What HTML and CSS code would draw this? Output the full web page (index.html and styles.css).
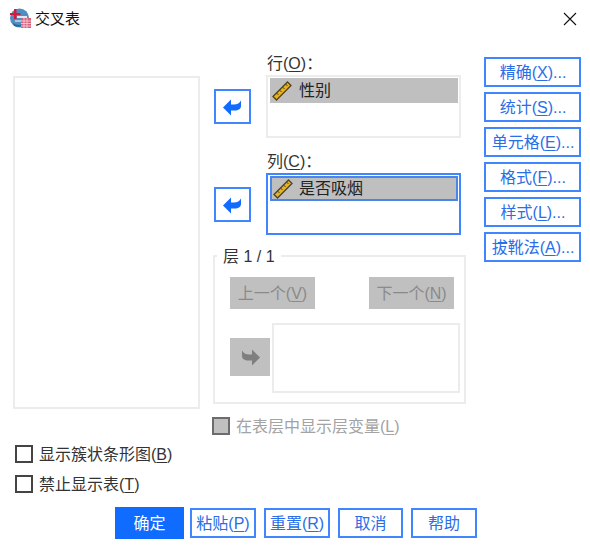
FILE: index.html
```html
<!DOCTYPE html>
<html lang="zh">
<head>
<meta charset="utf-8">
<title>交叉表</title>
<link rel="stylesheet" href="styles.css">
</head>
<body>
<div class="dialog">
  <header class="titlebar">
    <svg class="app-icon" width="21" height="20" viewBox="0 0 21 20">
      <circle cx="9.5" cy="10" r="9.5" fill="#4f8fc0"/>
      <path d="M3 15 Q9 19 15 15 L15 17 Q9 20 4 18Z" fill="#2c6596"/>
      <rect x="7" y="8" width="10" height="2" fill="#dce9f4"/>
      <rect x="5" y="12" width="8" height="2" fill="#a8c8e2"/>
      <path d="M4 1h2.500v4H10.500v2H6.500v4H4V7H0V5h4z" fill="#d31c3c"/>
      <rect x="11" y="10" width="10" height="10" fill="#d9607a"/>
      <path d="M11 13h10M11 15.500h10M11 18h10M14 10v10M17 10v10" stroke="#f6d5dc" stroke-width=".8"/>
    </svg>
    <span class="title">交叉表</span>
    <svg class="close" width="14" height="14" viewBox="0 0 14 14"><path d="M1 1l12 12M13 1L1 13" stroke="#111" stroke-width="1.100" fill="none"/></svg>
  </header>

  <main class="content">
    <section class="left">
      <div class="list source"></div>
      <label class="check first"><span class="box"></span>显示簇状条形图(<u>B</u>)</label>
      <label class="check"><span class="box"></span>禁止显示表(<u>T</u>)</label>
    </section>

    <section class="middle">
      <div class="target">
        <button class="move">
          <svg width="19" height="18" viewBox="0 0 19 18"><path d="M0 9.500L8 1.500V6.500H11C14 6.500 16 5.500 18 2.500V8C18 11 15 12.500 12 12.500H8V17.500Z" fill="#0f6cff"/></svg>
        </button>
        <div class="target-body">
          <div class="field-label">行(<u>O</u>)：</div>
          <div class="list vars">
            <div class="var">
              <svg class="ruler" width="22" height="22" viewBox="0 0 22 22"><path d="M2 16.500L16.500 2L20 5.500L5.500 20Z" fill="#e8b21e" stroke="#4a4326" stroke-width="1.300"/><path d="M5.500 13l2 2M8.500 10l2 2M11.500 7l2 2M14.500 4l2 2" stroke="#4a4326" stroke-width="1"/></svg>
              <span>性别</span>
            </div>
          </div>
        </div>
      </div>

      <div class="target second">
        <button class="move">
          <svg width="19" height="18" viewBox="0 0 19 18"><path d="M0 9.500L8 1.500V6.500H11C14 6.500 16 5.500 18 2.500V8C18 11 15 12.500 12 12.500H8V17.500Z" fill="#0f6cff"/></svg>
        </button>
        <div class="target-body">
          <div class="field-label">列(<u>C</u>)：</div>
          <div class="list vars focused">
            <div class="var selected">
              <svg class="ruler" width="22" height="22" viewBox="0 0 22 22"><path d="M2 16.500L16.500 2L20 5.500L5.500 20Z" fill="#e8b21e" stroke="#4a4326" stroke-width="1.300"/><path d="M5.500 13l2 2M8.500 10l2 2M11.500 7l2 2M14.500 4l2 2" stroke="#4a4326" stroke-width="1"/></svg>
              <span>是否吸烟</span>
            </div>
          </div>
        </div>
      </div>

      <div class="group">
        <span class="legend">层 1 / 1</span>
        <div class="pager">
          <button class="off wide">上一个(<u>V</u>)</button>
          <button class="off wide">下一个(<u>N</u>)</button>
        </div>
        <div class="layer">
          <button class="off move-off">
            <svg width="19" height="18" viewBox="0 0 19 18"><path d="M19 9.500L11 1.500V6.500H8C5 6.500 3 5.500 1 2.500V8C1 11 4 12.500 7 12.500H11V17.500Z" fill="#7f7f7f"/></svg>
          </button>
          <div class="list layer-list"></div>
        </div>
      </div>

      <label class="check disabled"><span class="box"></span>在表层中显示层变量(<u>L</u>)</label>
    </section>

    <aside class="side">
      <button class="btn side-btn">精确(<u>X</u>)...</button>
      <button class="btn side-btn">统计(<u>S</u>)...</button>
      <button class="btn side-btn">单元格(<u>E</u>)...</button>
      <button class="btn side-btn">格式(<u>F</u>)...</button>
      <button class="btn side-btn">样式(<u>L</u>)...</button>
      <button class="btn side-btn">拔靴法(<u>A</u>)...</button>
    </aside>
  </main>

  <footer class="actions">
    <button class="btn primary">确定</button>
    <button class="btn">粘贴(<u>P</u>)</button>
    <button class="btn">重置(<u>R</u>)</button>
    <button class="btn narrow">取消</button>
    <button class="btn">帮助</button>
  </footer>
</div>
</body>
</html>
```

FILE: styles.css
```css
* { box-sizing: border-box; }
html, body { margin: 0; padding: 0; background: #fff; }
body { font: 16px/20px "Liberation Sans", "Noto Sans CJK SC", sans-serif; color: #222; }
u { text-underline-offset: 2px; }

.dialog { width: 590px; height: 551px; background: #fff; overflow: hidden; display: flex; flex-direction: column; }

.titlebar { height: 57px; display: flex; align-items: flex-start; padding: 8px 10px 0 10px; flex: none; }
.app-icon { flex: none; }
.title { margin-left: 4px; font-size: 15px; line-height: 22px; color: #111; }
.close { margin-left: auto; margin-top: 4px; margin-right: 3px; }

.content { display: flex; align-items: flex-start; height: 450px; padding-left: 13px; flex: none; }

.list { background: #fff; border: 2px solid #ececec; }

.left { width: 187px; padding-top: 19px; flex: none; }
.source { height: 333px; }

.check { display: flex; align-items: flex-start; height: 18px; line-height: 20px; color: #333; margin-top: 12px; margin-left: 2px; white-space: nowrap; }
.check.first { margin-top: 36px; }
.box { width: 18px; height: 18px; border: 2px solid #444; background: #fff; margin-right: 6px; flex: none; }
.check.disabled { color: #a3a3a3; margin: 13px 0 0 -1px; }
.check.disabled .box { background: #c0c0c0; border-color: #6c6c6c; margin-right: 6px; }

.middle { width: 253px; margin-left: 13px; flex: none; }

.target { display: flex; align-items: flex-start; height: 82px; }
.target.second { height: 100px; margin-top: 16px; }
.target-body { width: 195px; margin-left: 15px; flex: none; }
.field-label { height: 18px; line-height: 13px; color: #333; white-space: nowrap; margin-left: 1px; }

.move { width: 37px; height: 35px; margin: 32px 0 0 1px; padding: 0; background: #fff; border: 2px solid #3f86ff; display: flex; align-items: center; justify-content: center; flex: none; }

.vars { height: 63px; padding: 1px 1px 0 2px; }
.vars.focused { border-color: #3f86ff; height: 62px; }
.var { height: 25px; background: #bfbfbf; display: flex; align-items: center; padding-left: 1px; color: #222; }
.var.selected { border: 2px solid #4a86e8; padding-left: 0; }
.var.selected .ruler { margin-right: 5px; }
.ruler { flex: none; margin-right: 6px; }

.group { position: relative; height: 149px; border: 2px solid #ececec; padding: 20px 4px 0 15px; }
.legend { position: absolute; left: 2px; top: -10px; background: #fff; padding: 0 6px; color: #333; line-height: 20px; white-space: nowrap; }
.pager { display: flex; justify-content: space-between; margin-right: 6px; }
.off { background: #c0c0c0; border: 0; padding: 0; color: #8a8a8a; font: inherit; }
.wide { width: 85px; height: 32px; padding-top: 2px; }
.layer { display: flex; align-items: flex-end; margin-top: 14px; }
.move-off { width: 40px; height: 38px; display: flex; align-items: center; justify-content: center; margin-bottom: 17px; flex: none; }
.layer-list { width: 188px; height: 70px; margin-left: 2px; flex: none; }

.side { width: 97px; margin-left: 18px; display: flex; flex-direction: column; gap: 5px; flex: none; }
.btn { height: 30px; background: #fff; border: 2px solid #3f86ff; color: #2a6ee8; font: inherit; padding: 2px 0 0; white-space: nowrap; }
.side-btn { width: 97px; padding-left: 1px; }

.actions { display: flex; align-items: center; padding-left: 115px; height: 32px; flex: none; }
.actions .btn { width: 66px; margin-left: 8px; }
.actions .btn:nth-child(2) { margin-left: 6px; }
.actions .btn.narrow { width: 65px; }
.actions .primary { width: 69px; height: 32px; margin-left: 0; background: #0f6cff; border-color: #0f6cff; color: #fff; }
```
